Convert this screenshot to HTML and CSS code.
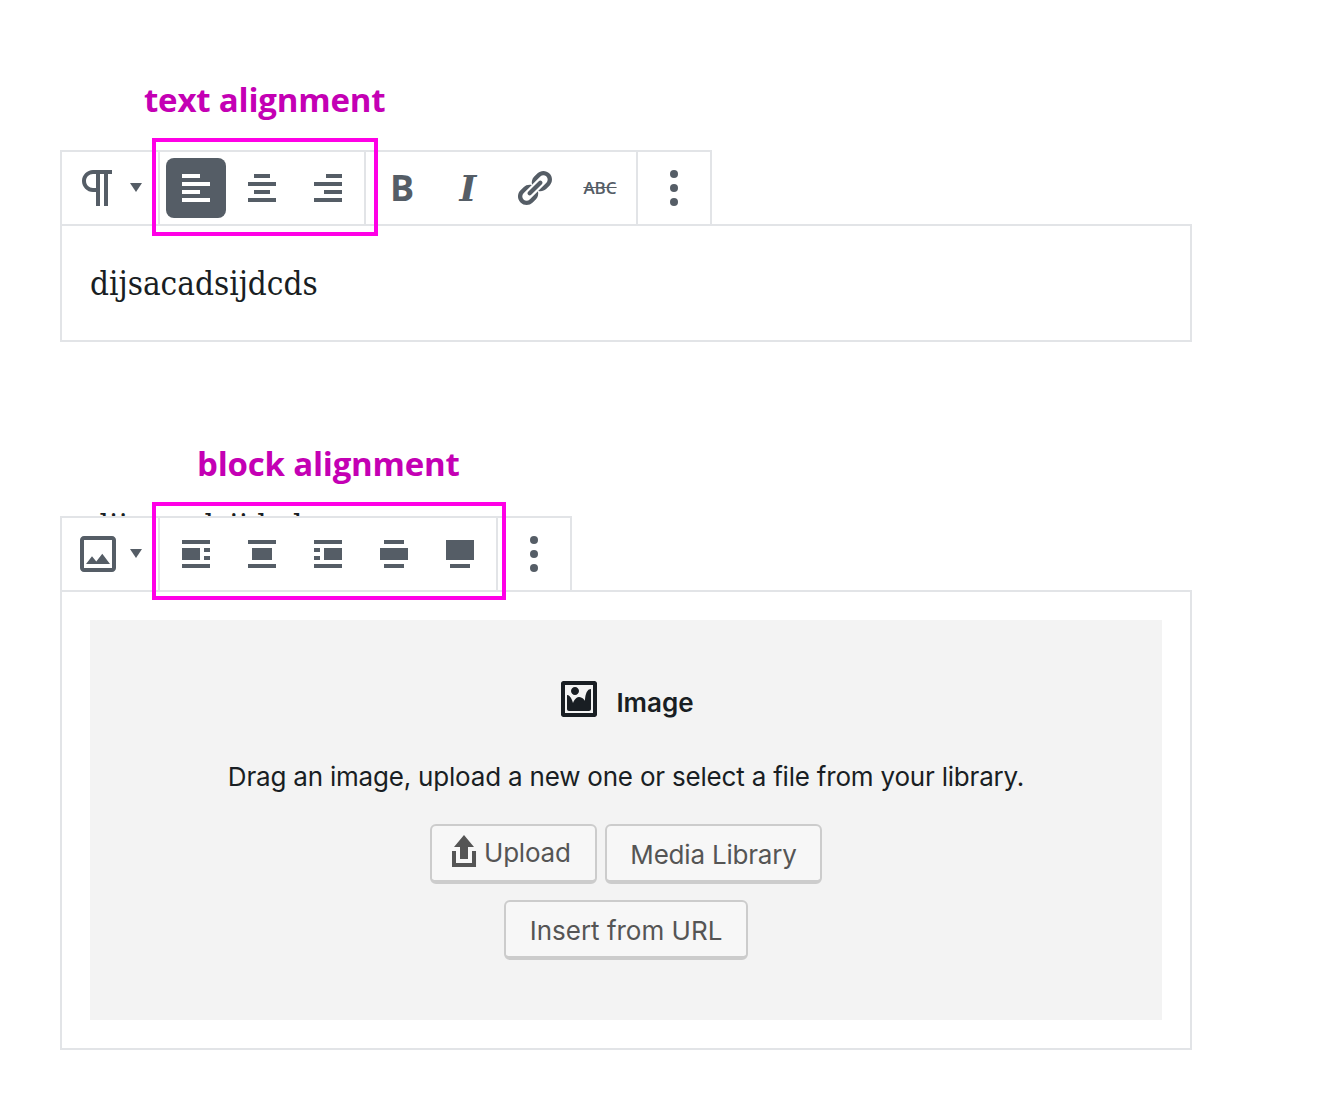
FILE: index.html
```html
<!DOCTYPE html>
<html lang="en">
<head>
<meta charset="utf-8">
<title>Alignment toolbars</title>
<link rel="stylesheet" href="styles.css">
</head>
<body>
<main class="page">
  <section class="sec sec-text">
    <h2 class="note note-text">text alignment</h2>
    <div class="toolbar">
      <div class="group switcher">
        <svg class="sw-icon" width="48" height="48" viewBox="0 0 24 24"><path d="M11 5v7H9.5C7.6 12 6 10.4 6 8.5S7.6 5 9.5 5H11m8-2H9.5C6.5 3 4 5.5 4 8.5S6.5 14 9.5 14H11v7h2V5h2v16h2V5h2V3z"/></svg>
        <svg class="caret" width="12" height="9" viewBox="0 0 12 9"><path d="M0 0h12L6 9z"/></svg>
      </div>
      <div class="group">
        <button class="btn active"><svg width="40" height="40" viewBox="0 0 20 20"><path d="M12 5V3H3v2h9zm5 4V7H3v2h14zm-5 4v-2H3v2h9zm5 4v-2H3v2h14z"/></svg></button>
        <button class="btn"><svg width="40" height="40" viewBox="0 0 20 20"><path d="M14 5V3H6v2h8zm3 4V7H3v2h14zm-3 4v-2H6v2h8zm3 4v-2H3v2h14z"/></svg></button>
        <button class="btn"><svg width="40" height="40" viewBox="0 0 20 20"><path d="M17 5V3H9v2h8zm0 4V7H3v2h14zm0 4v-2H8v2h9zm0 4v-2H3v2h14z"/></svg></button>
      </div>
      <div class="group">
        <button class="btn fmt-b">B</button>
        <button class="btn fmt-i">I</button>
        <button class="btn"><svg width="40" height="40" viewBox="0 0 20 20"><path d="M17.74 2.76c1.68 1.69 1.68 4.41 0 6.1l-1.53 1.52c-1.12 1.12-2.7 1.47-4.14 1.09l2.62-2.61.76-.77.76-.76c.84-.84.84-2.2 0-3.04-.84-.85-2.2-.85-3.04 0l-.77.76-3.38 3.38c-.37-1.44-.02-3.02 1.1-4.14l1.52-1.53c1.69-1.68 4.42-1.68 6.1 0zM8.59 13.43l5.34-5.34c.42-.42.42-1.1 0-1.52-.44-.43-1.13-.39-1.53 0l-5.33 5.34c-.42.42-.42 1.1 0 1.52.44.43 1.13.39 1.52 0zm-.76 2.29l4.14-4.15c.38 1.44.03 3.02-1.09 4.14l-1.52 1.53c-1.69 1.68-4.41 1.68-6.1 0-1.68-1.68-1.68-4.42 0-6.1l1.53-1.52c1.12-1.12 2.7-1.47 4.14-1.1l-4.14 4.15c-.85.84-.85 2.2 0 3.05.84.84 2.2.84 3.04 0z"/></svg></button>
        <button class="btn fmt-s">ABC</button>
      </div>
      <div class="group last">
        <button class="btn"><span class="dots"><i></i><i></i><i></i></span></button>
      </div>
      <div class="hl hl-text"></div>
    </div>
    <div class="box para">dijsacadsijdcds</div>
  </section>

  <section class="sec sec-block">
    <h2 class="note note-block">block alignment</h2>
    <div class="peek"><span>dijsacadsijdcds</span></div>
    <div class="toolbar">
      <div class="group switcher">
        <svg class="sw-icon" width="48" height="48" viewBox="0 0 24 24"><path d="M19 5v14H5V5h14m0-2H5c-1.1 0-2 .9-2 2v14c0 1.1.9 2 2 2h14c1.1 0 2-.9 2-2V5c0-1.1-.9-2-2-2zm-4.86 8.86l-3 3.87L9 13.14 6 17h12l-3.86-5.14z"/></svg>
        <svg class="caret" width="12" height="9" viewBox="0 0 12 9"><path d="M0 0h12L6 9z"/></svg>
      </div>
      <div class="group">
        <button class="btn"><svg width="40" height="40" viewBox="0 0 20 20"><path d="M3 3h14v2H3zM3 7h9v6H3zM14 7h3v2h-3zM14 11h3v2h-3zM3 15h14v2H3z"/></svg></button>
        <button class="btn"><svg width="40" height="40" viewBox="0 0 20 20"><path d="M3 3h14v2H3zM5 7h10v6H5zM3 15h14v2H3z"/></svg></button>
        <button class="btn"><svg width="40" height="40" viewBox="0 0 20 20"><path d="M3 3h14v2H3zM8 7h9v6H8zM3 7h3v2H3zM3 11h3v2H3zM3 15h14v2H3z"/></svg></button>
        <button class="btn"><svg width="40" height="40" viewBox="0 0 20 20"><path d="M5 3h10v2H5zM3 7h14v6H3zM5 15h10v2H5z"/></svg></button>
        <button class="btn"><svg width="40" height="40" viewBox="0 0 20 20"><path d="M3 3h14v10H3zM5 15h10v2H5z"/></svg></button>
      </div>
      <div class="group last">
        <button class="btn"><span class="dots"><i></i><i></i><i></i></span></button>
      </div>
      <div class="hl hl-block"></div>
    </div>
    <div class="box media">
      <div class="placeholder">
        <div class="ph-title">
          <svg width="40" height="40" viewBox="0 0 20 20"><path d="M2.25 1h15.5c.69 0 1.25.56 1.25 1.25v15.5c0 .69-.56 1.25-1.25 1.25H2.25C1.56 19 1 18.44 1 17.75V2.25C1 1.56 1.56 1 2.25 1zM17 17V3H3v14h14zM10 6c0-1.1-.9-2-2-2s-2 .9-2 2 .9 2 2 2 2-.9 2-2zm3 5s0-6 3-6v10c0 .55-.45 1-1 1H5c-.55 0-1-.45-1-1V8c2 0 3 4 3 4s1-3 3-3 3 2 3 2z"/></svg>
          <span>Image</span>
        </div>
        <p class="ph-text">Drag an image, upload a new one or select a file from your library.</p>
        <div class="ph-actions">
          <button class="wp-btn up"><svg width="40" height="40" viewBox="0 0 20 20"><path d="M8 14V8H5l5-6 5 6h-3v6H8zm-2 2v-6H4v8h12.01v-8H14v6H6z"/></svg>Upload</button>
          <button class="wp-btn ml">Media Library</button>
          <button class="wp-btn url">Insert from URL</button>
        </div>
      </div>
    </div>
  </section>
</main>
</body>
</html>
```

FILE: styles.css
```css
* { box-sizing: border-box; }
html, body { margin: 0; padding: 0; background: #fff; }
body { overflow: hidden; height: 1118px; }
.page { padding-left: 60px; width: 1192px; }
.sec-text { padding-top: 78px; }
.sec-block { padding-top: 100px; }
.note {
  margin: 0;
  color: #c400b4;
  font: 700 33px/44px "Open Sans", sans-serif;
  letter-spacing: -0.2px;
}
.note-text { padding-left: 84px; height: 72px; }
.note-block { padding-left: 137px; height: 71px; }
.peek {
  height: 3px;
  margin-left: 30px;
  overflow: hidden;
  font: 33px/44px "DejaVu Serif Condensed", "Liberation Serif", serif;
  color: #191e23;
}
.peek span { display: block; margin-top: -8px; }
.toolbar {
  position: relative;
  display: flex;
  width: max-content;
  border: 2px solid #e2e4e7;
  border-bottom: 0;
  height: 74px;
}
.group {
  display: flex;
  gap: 6px;
  padding: 6px;
  border-right: 2px solid #e2e4e7;
}
.group.last { border-right: 0; }
.switcher { width: 98px; padding: 0; position: relative; }
.sw-icon { position: absolute; left: 12px; top: 12px; fill: #555d66; }
.caret { position: absolute; left: 68px; top: 31px; fill: #555d66; }
.btn {
  width: 60px;
  height: 60px;
  padding: 0;
  border: 0;
  border-radius: 8px;
  background: transparent;
  color: #555d66;
  display: flex;
  align-items: center;
  justify-content: center;
}
.btn svg { fill: #555d66; display: block; }
.btn.active { background: #555d66; }
.btn.active svg { fill: #fff; }
.fmt-b { font: 700 36px/40px "Open Sans", sans-serif; }
.fmt-i { font: italic 700 36px/40px "DejaVu Serif", serif; }
.fmt-s { font: 600 17px/20px "Open Sans", sans-serif; text-decoration: line-through; }
.dots { display: flex; flex-direction: column; gap: 6px; }
.dots i { display: block; width: 8px; height: 8px; border-radius: 50%; background: #555d66; }
.hl {
  position: absolute;
  z-index: 2;
  left: 90px;
  height: 98px;
  border: 4px solid #ff00e6;
  pointer-events: none;
}
.hl-text { top: -14px; width: 226px; }
.hl-block { top: -16px; width: 354px; }
.box {
  width: 1132px;
  border: 2px solid #e2e4e7;
  background: #fff;
}
.para {
  height: 118px;
  padding: 36px 28px 0;
  color: #191e23;
  font: 33px/44px "DejaVu Serif Condensed", "Liberation Serif", serif;
}
.media { height: 460px; padding: 28px; }
.placeholder {
  height: 400px;
  background: #f3f3f3;
  display: flex;
  flex-direction: column;
  align-items: center;
  padding-top: 58px;
  font-family: "Inter", sans-serif;
  color: #191e23;
}
.ph-title { display: flex; align-items: center; gap: 17px; padding-left: 1px; font-size: 26px; font-weight: 600; height: 48px; }
.ph-title svg { fill: #191e23; margin-top: -7px; }
.ph-text { margin: 33px 0 29px; font-size: 26px; line-height: 36px; letter-spacing: -0.2px; }
.ph-actions {
  display: flex;
  flex-wrap: wrap;
  justify-content: center;
  gap: 16px 8px;
  width: 500px;
}
.wp-btn {
  height: 60px;
  border: 2px solid #ccc;
  border-bottom-width: 4px;
  border-radius: 6px;
  background: #f7f7f7;
  color: #555;
  font: 26px/1 "Inter", sans-serif;
  letter-spacing: -0.2px;
  display: flex;
  align-items: center;
  justify-content: center;
  padding: 4px 0 0;
}
.wp-btn svg { fill: #555; margin-top: -4px; }
.up { width: 167px; justify-content: flex-start; padding: 0 0 0 12px; }
.ml { width: 217px; }
.url { width: 244px; letter-spacing: 0; }
```
